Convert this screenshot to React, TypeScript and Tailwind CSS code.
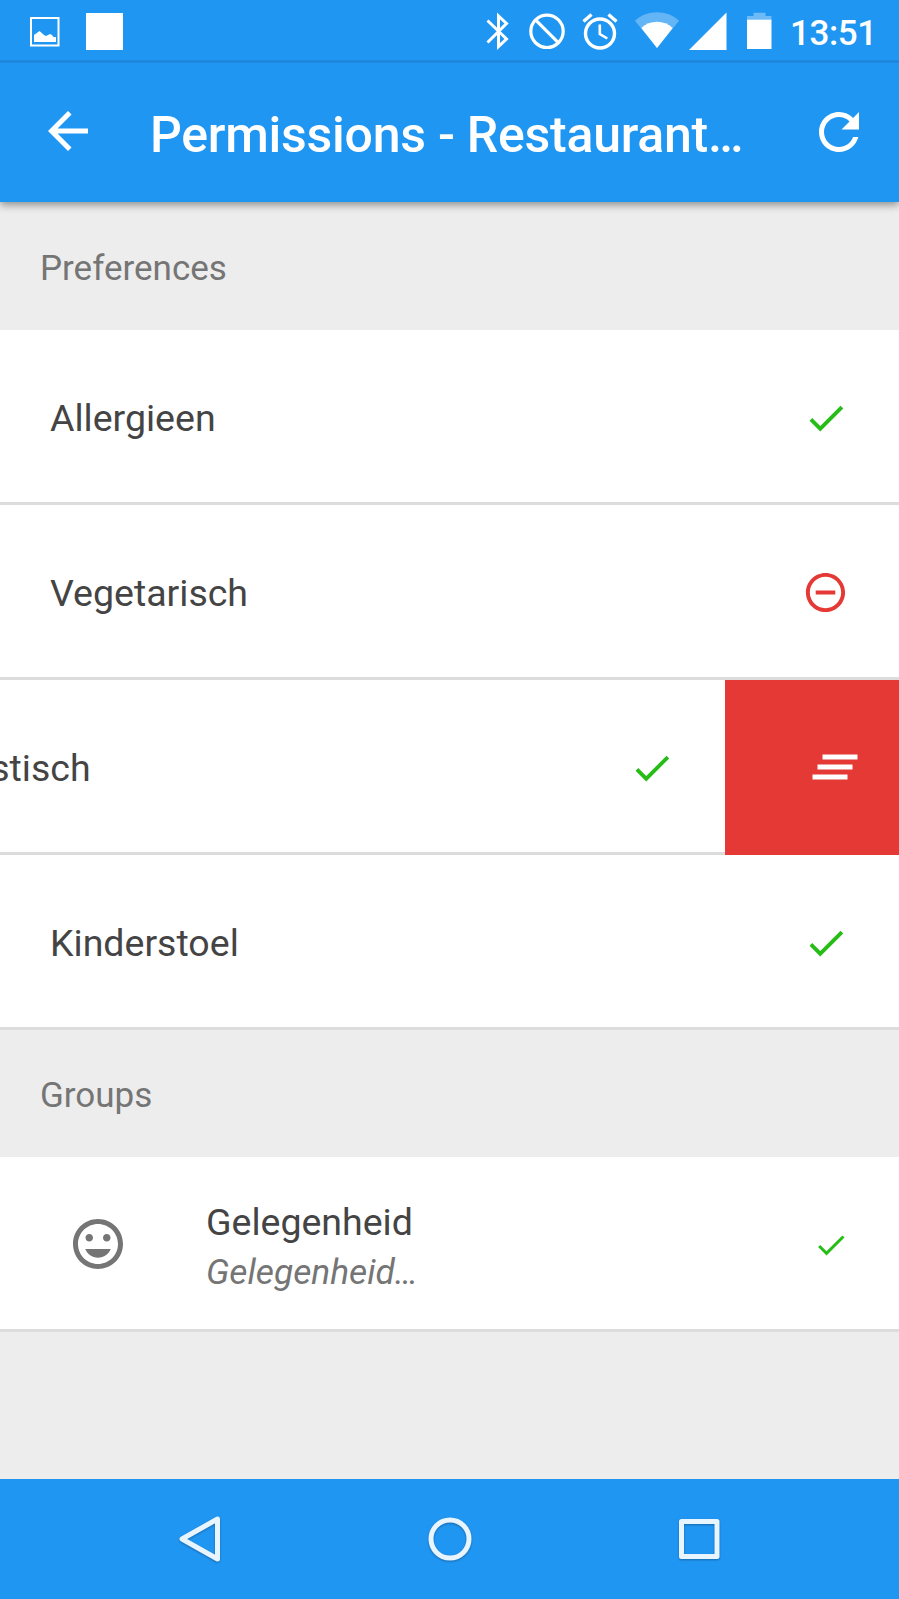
import type { ReactNode } from 'react';

function Check({ className }: { className: string }) {
  return (
    <svg viewBox="0 0 24 24" className={`shrink-0 fill-[#27bd17] ${className}`}>
      <path d="M9 16.170L4.830 12l-1.420 1.410L9 19 21 7l-1.410-1.410z" />
    </svg>
  );
}

function Denied() {
  return (
    <svg viewBox="0 0 24 24" className="mt-[2px] size-[47px] shrink-0 fill-[#e53935]">
      <path d="M7 11v2h10v-2H7zm5-9C6.480 2 2 6.480 2 12s4.480 10 10 10 10-4.480 10-10S17.520 2 12 2zm0 18c-4.410 0-8-3.590-8-8s3.590-8 8-8 8 3.590 8 8-3.590 8-8 8z" />
    </svg>
  );
}

function StatusBar() {
  return (
    <div className="flex h-[63px] shrink-0 items-start border-b-[3px] border-[#1e88de] pl-[30px] pt-[12px] text-white">
      <svg viewBox="0 0 30 30" className="mt-[5px] size-[30px]">
        <rect x="1" y="1" width="27.500" height="27.500" fill="none" stroke="currentColor" strokeWidth="2" />
        <path d="M4 25v-7l5.500-4 4.500 4 2 1 4-2 2 1 1.500 2H26v5z" fill="currentColor" />
      </svg>
      <div className="ml-[26px] mt-px size-[37px] bg-white" />
      <svg viewBox="0 0 24 38" className="ml-[363px] h-[38px] w-[24px]" fill="none" stroke="currentColor" strokeWidth="3">
        <path d="M1.500 8.500L20.500 27 12.500 34.500V4L20.500 11.500 1.500 30.500" />
      </svg>
      <svg viewBox="0 0 38 38" className="ml-[17.500px] size-[38px]" fill="none" stroke="currentColor" strokeWidth="3.200">
        <circle cx="19" cy="19.300" r="16.200" />
        <path d="M7.500 7.800l23 23" />
      </svg>
      <svg viewBox="0 0 38 38" className="ml-[15.500px] size-[38px]" fill="none" stroke="currentColor" strokeWidth="3.400">
        <circle cx="19" cy="21.500" r="14.500" />
        <path d="M2.500 9.500l8-7M35.500 9.500l-8-7" />
        <path d="M18.800 12.500v9.500l7.500 4.500" strokeWidth="2.600" />
      </svg>
      <svg viewBox="0 0 44 38" className="ml-[16px] h-[38px] w-[44px]" fill="currentColor">
        <path d="M0 8.700C12-2.500 32-2.500 44 8.700L22 36z" opacity=".3" />
        <path d="M6.300 16C15 7.800 29 7.800 37.700 16L22 36z" />
      </svg>
      <svg viewBox="0 0 38 38" className="ml-[10px] size-[38px]" fill="currentColor">
        <path d="M0 38L37.500 0.500V38z" />
      </svg>
      <svg viewBox="0 0 25 38" className="ml-[20px] h-[38px] w-[25px]" fill="currentColor">
        <path d="M0 4h6.500V.8h12V4H24.500v4H0z" opacity=".35" />
        <path d="M0 7.700h24.500V37H0z" />
      </svg>
      <span className="ml-[18px] mt-[2px] text-[35px] font-medium leading-[40px] tracking-[-0.400px]">13:51</span>
    </div>
  );
}

function AppBar() {
  return (
    <header className="flex h-[139px] shrink-0 items-center pl-[38px] pr-[30px] text-white">
      <svg viewBox="0 0 24 24" className="mb-[3px] size-[60px] shrink-0 fill-current">
        <path d="M20 11H7.830l5.590-5.590L12 4l-8 8 8 8 1.410-1.410L7.830 13H20v-2z" />
      </svg>
      <h1 className="ml-[52px] grow whitespace-nowrap pt-[5px] text-[50px] font-medium leading-[60px] tracking-[-0.250px]">
        Permissions - Restaurant…
      </h1>
      <svg viewBox="0 0 24 24" className="mb-[1px] size-[60px] shrink-0 fill-current">
        <path d="M17.650 6.350C16.200 4.900 14.210 4 12 4c-4.420 0-7.990 3.580-7.990 8s3.570 8 7.990 8c3.730 0 6.840-2.550 7.730-6h-2.080c-.82 2.330-3.040 4-5.650 4-3.310 0-6-2.690-6-6s2.690-6 6-6c1.660 0 3.140.69 4.220 1.780L13 11h7V4l-2.350 2.350z" />
      </svg>
    </header>
  );
}

function SectionHeader({ children, className }: { children: ReactNode; className: string }) {
  return (
    <h2 className={`flex shrink-0 items-center pl-[40px] text-[35px] leading-[40px] text-[#757575] ${className}`}>
      {children}
    </h2>
  );
}

function Row({ label, children }: { label: string; children: ReactNode }) {
  return (
    <div className="flex h-[175px] w-[899px] shrink-0 items-center justify-between border-b-[3px] border-[#dcdcdc] bg-white px-[50px]">
      <span className="pt-[4px]">{label}</span>
      {children}
    </div>
  );
}

function SwipedRow() {
  return (
    <div className="flex h-[175px] items-start justify-end overflow-hidden">
      <Row label="Veganistisch">
        <Check className="mt-[3px] size-[46px]" />
      </Row>
      <button className="flex h-[174.500px] w-[174px] shrink-0 items-center justify-end bg-[#e53935] pr-[34px]">
        <svg viewBox="0 0 24 24" className="size-[60px] fill-white">
          <path d="M5 13h14v-2H5v2zm-2 4h14v-2H3v2zM7 7v2h14V7H7z" />
        </svg>
      </button>
    </div>
  );
}

function GroupRow() {
  return (
    <div className="flex h-[175px] shrink-0 items-center border-b-[3px] border-[#dcdcdc] bg-white pl-[68px] pr-[50px]">
      <svg viewBox="0 0 24 24" className="mt-[2px] size-[60px] shrink-0 fill-[#757575]">
        <path d="M11.990 2C6.470 2 2 6.480 2 12s4.470 10 9.990 10C17.520 22 22 17.520 22 12S17.520 2 11.990 2zM12 20c-4.420 0-8-3.580-8-8s3.580-8 8-8 8 3.580 8 8-3.580 8-8 8zm3.500-9c.83 0 1.500-.67 1.500-1.500S16.330 8 15.500 8 14 8.670 14 9.500s.67 1.500 1.500 1.500zm-7 0c.83 0 1.500-.67 1.500-1.500S9.330 8 8.500 8 7 8.670 7 9.500 7.670 11 8.500 11zm3.500 6.500c2.330 0 4.310-1.460 5.110-3.500H6.890c.8 2.040 2.780 3.500 5.110 3.500z" />
      </svg>
      <div className="ml-[78px] grow pt-[7px]">
        <p className="text-[37.500px] leading-[50px]">Gelegenheid</p>
        <p className="text-[35.300px] italic leading-[50px] text-[#757575]">Gelegenheid…</p>
      </div>
      <Check className="mt-[3px] size-[36px]" />
    </div>
  );
}

function NavBar() {
  return (
    <nav className="flex h-[120px] shrink-0 items-center justify-between bg-[#2096f3] px-[174px]">
      <svg viewBox="0 0 50 50" className="size-[50px] drop-shadow-[0_1px_1px_rgba(0,0,0,0.3)]" fill="none" stroke="#e8f4fe" strokeWidth="5" strokeLinejoin="round">
        <path d="M43.500 5v40L8 25z" />
      </svg>
      <svg viewBox="0 0 50 50" className="size-[50px] drop-shadow-[0_1px_1px_rgba(0,0,0,0.3)]" fill="none" stroke="#e8f4fe" strokeWidth="5">
        <circle cx="25" cy="25" r="19" />
      </svg>
      <svg viewBox="0 0 50 50" className="size-[50px] drop-shadow-[0_1px_1px_rgba(0,0,0,0.3)]" fill="none" stroke="#e8f4fe" strokeWidth="5" strokeLinejoin="round">
        <rect x="6.500" y="7.500" width="35.500" height="35" />
      </svg>
    </nav>
  );
}

export default function App() {
  return (
    <div className="flex h-[1599px] w-[899px] flex-col overflow-hidden bg-[#ededed] font-[Roboto,sans-serif] text-[#444444]">
      <div className="z-10 flex h-[202px] shrink-0 flex-col bg-[#2096f3] shadow-[0_3px_8px_rgba(0,0,0,0.4)]">
        <StatusBar />
        <AppBar />
      </div>
      <SectionHeader className="h-[128px] pt-[6px]">Preferences</SectionHeader>
      <div className="shrink-0 text-[37.500px] leading-[50px]">
        <Row label="Allergieen">
          <Check className="mt-[3px] size-[46px]" />
        </Row>
        <Row label="Vegetarisch">
          <Denied />
        </Row>
        <SwipedRow />
        <Row label="Kinderstoel">
          <Check className="mt-[3px] size-[46px]" />
        </Row>
      </div>
      <SectionHeader className="h-[127px] pt-[5px]">Groups</SectionHeader>
      <GroupRow />
      <div className="grow" />
      <NavBar />
    </div>
  );
}
